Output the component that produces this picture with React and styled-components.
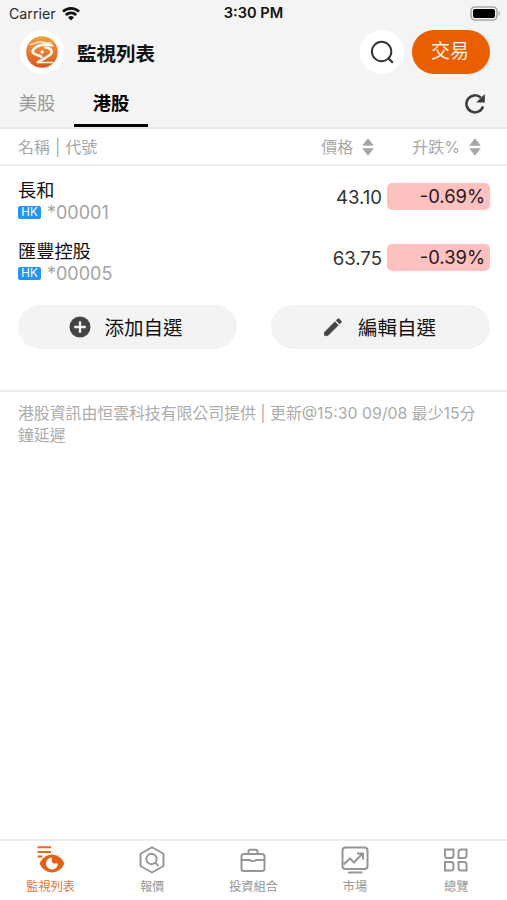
import React from 'react';

import styled, { createGlobalStyle } from "styled-components"

const GlobalStyle = createGlobalStyle`
* {
    box-sizing: border-box;
}
body {
    margin: 0;
    background-color: white;
    color: #1c1c1c;
    font-family: Inter, "Noto Sans CJK TC", sans-serif;
}
button {
    padding: 0;
    border: none;
    font: inherit;
    color: inherit;
    cursor: pointer;
}
`
const Screen = styled.div`
display: flex;
flex-direction: column;
height: 100vh;
`
const Header = styled.header`
height: 129px;
background-color: #f4f4f4;
border-bottom: 2px solid #e8e8e8;
`
const StatusBar = styled.div`
display: grid;
grid-template-columns: 1fr auto 1fr;
align-items: center;
height: 27px;
padding: 0 6px 0 9px;
line-height: 27px;
color: #2a2a2a;
`
const Carrier = styled.span`
display: flex;
align-items: center;
gap: 6px;
font-size: 14.2px;
`
const Clock = styled.span`
margin-right: 3px;
font-weight: 600;
color: #111;
font-size: 14.6px;
`
const BatterySlot = styled.span`
display: flex;
justify-content: flex-end;
`
const TitleBar = styled.div`
display: flex;
align-items: center;
height: 50px;
padding: 0 17px 0 20px;
`
const Logo = styled.span`
display: flex;
align-items: center;
justify-content: center;
width: 44px;
height: 44px;
border-radius: 50%;
background-color: white;
`
const Title = styled.h1`
flex: 1;
margin: 0 0 0 13px;
padding-top: 3px;
font-size: 19.5px;
line-height: 28px;
font-weight: 700;
color: #111;
`
const SearchButton = styled.button`
display: flex;
align-items: center;
justify-content: center;
width: 44px;
height: 44px;
border-radius: 50%;
background-color: white;
`
const TradeButton = styled.button`
width: 78px;
height: 44px;
margin-left: 8px;
padding-right: 2px;
border-radius: 22px;
background-color: #e95f00;
color: #fff1e3;
font-size: 19px;
line-height: 44px;
`
const Tabs = styled.nav`
display: flex;
align-items: center;
height: 50px;
padding-right: 21px;
`
const Tab = styled.button`
width: 74px;
height: 50px;
padding-top: 5px;
background: none;
border-bottom: 3px solid ${props => props.$active ? "#000" : "transparent"};
font-size: 18.2px;
line-height: 42px;
font-weight: ${props => props.$active ? 700 : 400};
color: ${props => props.$active ? "#000" : "#999"};
`
const RefreshButton = styled.button`
display: flex;
margin: 3px 0 0 auto;
background: none;
`
const ListHeader = styled.div`
display: flex;
align-items: center;
height: 37px;
padding: 0 26px 0 18px;
border-bottom: 2px solid #ececec;
font-size: 16px;
line-height: 34px;
color: #a8a8a8;
`
const HeaderName = styled.span`
flex: 1;
word-spacing: 0.5px;
`
const SortLabel = styled.span`
display: flex;
align-items: center;
gap: 9px;
margin-left: ${props => props.$offset || 0}px;
`
const StockRow = styled.div`
display: flex;
align-items: center;
height: 61px;
padding: 0 17px 0 18px;
`
const StockInfo = styled.div`
flex: 1;
padding-top: 8px;
`
const StockName = styled.div`
font-size: 18.2px;
line-height: 24px;
color: #111;
`
const StockCode = styled.div`
display: flex;
align-items: center;
gap: 6px;
font-size: 18px;
line-height: 22px;
color: #a3a3a3;
`
const Market = styled.span`
width: 23px;
height: 13px;
border-radius: 2px;
background-color: #2196f3;
color: white;
font-size: 11.5px;
line-height: 13px;
text-align: center;
`
const Price = styled.span`
font-size: 18.6px;
color: #333;
`
const Change = styled.span`
width: 103px;
height: 27px;
margin-left: 5px;
padding-right: 5px;
border-radius: 5px;
background-color: #ffc0c0;
color: #26191a;
font-size: 18.4px;
line-height: 27px;
text-align: right;
`
const Actions = styled.div`
display: flex;
justify-content: space-between;
margin: 17px 17px 0 18px;
`
const ActionButton = styled.button`
display: flex;
align-items: center;
justify-content: center;
gap: ${props => props.$gap || 12}px;
width: 219px;
height: 44px;
padding: 2px 3px 0 0;
border-radius: 22px;
background-color: #f3f3f3;
color: #111;
font-size: 19.5px;
line-height: 42px;

svg {
    margin-bottom: 2px;
}
`
const Notice = styled.p`
flex: 1;
margin: 41px 0 0;
padding: 11px 28px 0 18px;
border-top: 2px solid #ebebeb;
font-size: 15.87px;
line-height: 22px;
color: #acacac;
`
const BottomBar = styled.nav`
display: grid;
grid-template-columns: repeat(5, 1fr);
height: 61px;
border-top: 2px solid #ececec;
`
const NavItem = styled.button`
display: flex;
flex-direction: column;
align-items: center;
padding-top: 5px;
background: none;
font-size: 12.2px;
line-height: 18px;
color: ${props => props.$active ? "#e5763a" : "#969696"};

svg {
    margin-bottom: 4px;
}
`

const WifiIcon = () => (
    <svg width="18" height="14" viewBox="0 0 18 14" fill="none" stroke="#111" strokeWidth="2.6">
        <path d="M1 4.6a11.6 11.6 0 0 1 16 0" />
        <path d="M3.8 8a7.5 7.5 0 0 1 10.4 0" />
        <path d="M9 13.5 6 10.4a4.3 4.3 0 0 1 6 0Z" fill="#111" stroke="none" />
    </svg>
)

const BatteryIcon = () => (
    <svg width="31" height="15" viewBox="0 0 31 15">
        <rect x="1" y="1" width="26" height="13" rx="4" fill="#f4f4f4" stroke="#aaa" strokeWidth="1.6" />
        <rect x="3" y="3" width="22" height="9" rx="2" fill="#000" />
        <path d="M28.5 5.2c2 .6 2 4 0 4.6Z" fill="#aaa" />
    </svg>
)

const LogoIcon = () => (
    <svg width="32" height="32" viewBox="0 0 32 32">
        <defs>
            <linearGradient id="logoFill" x1="0" y1="0" x2="0" y2="1">
                <stop offset="0" stopColor="#f2a03d" />
                <stop offset="1" stopColor="#d9571f" />
            </linearGradient>
        </defs>
        <circle cx="16" cy="16" r="15.8" fill="url(#logoFill)" />
        <g fill="none" stroke="#fff8ef" strokeLinecap="round">
            <path d="M4.5 8.6C9 8 10.5 5.8 14.5 5.8c3 0 4 1.2 7 1h3.500" strokeWidth="1.3" />
            <path d="M26 9.400C20 8.200 14.500 8.400 10.500 10.800 6 13.500 5.300 16.300 9 18.200c2.500 1.200 5.500 1.300 6.500 2.800" strokeWidth="2.6" />
            <path d="M19.500 11.500c5 .5 7.300 3.200 5.500 6.200-2 3.200-7.500 4.800-13 8.300" strokeWidth="2.6" />
            <path d="M11 26.400h16" strokeWidth="1.500" />
        </g>
        <path d="m16.200 13.200.8 2 2 .8-2 .8-.8 2-.8-2-2-.8 2-.8Z" fill="#fff8ef" />
    </svg>
)

const SearchIcon = () => (
    <svg width="24" height="24" viewBox="0 0 24 24" fill="none" stroke="#333" strokeWidth="2">
        <circle cx="11.6" cy="11.5" r="9.7" />
        <path d="m17.8 17.8 5 5" strokeWidth="2.3" />
    </svg>
)

const RefreshIcon = () => (
    <svg width="22" height="22" viewBox="0 0 22 22">
        <path d="M19 13.5A8.5 8.5 0 1 1 16.8 4.7" fill="none" stroke="#3c3c3c" strokeWidth="2.5" />
        <path d="M20.8 1v8.6h-8.6Z" fill="#3c3c3c" />
    </svg>
)

const SortIcon = () => (
    <svg width="12" height="18" viewBox="0 0 12 18" fill="#a6a6a6">
        <path d="M6 .3 11.8 7.8H.2Z" />
        <path d="M6 17.7 11.8 10.200H.2Z" />
    </svg>
)

const AddIcon = () => (
    <svg width="23" height="22" viewBox="0 0 23 22">
        <circle cx="11" cy="11" r="10.5" fill="#444" />
        <path d="M11 5.2v11.6M5.2 11h11.6" stroke="#f3f3f3" strokeWidth="2.3" />
    </svg>
)

const EditIcon = () => (
    <svg width="22" height="22" viewBox="0 0 22 22" fill="#444" stroke="#444" strokeWidth="0.7" strokeLinejoin="round">
        <path d="M2.5 16.2 12.9 5.8l3.4 3.4L5.9 19.6H2.5Z" />
        <path d="m14.2 4.5 1.5-1.5c.5-.5 1-.5 1.5 0l1.9 1.9c.5.5.5 1 0 1.5l-1.5 1.5Z" />
    </svg>
)

const WatchIcon = () => (
    <svg width="28" height="28" viewBox="0 0 28 28">
        <path d="M.5 1.2H14M.5 5.9H14M.5 10.4h5" stroke="#e46b25" strokeWidth="2" />
        <path d="M2.7 17.5C5 12 9.5 8.5 15 8.5S25 12 27.3 17.5C25 23 20.5 26.5 15 26.500S5 23 2.7 17.5Z" fill="#e56115" />
        <path d="M15 11.500a6 6 0 1 0 6 6h-3.200a2.800 2.800 0 0 1-2.800-2.800Z" fill="white" />
    </svg>
)

const QuoteIcon = () => (
    <svg width="28" height="28" viewBox="0 0 28 28" fill="none" stroke="#969696" strokeWidth="1.9" strokeLinejoin="round">
        <path d="M14 1.2 25.500 7.800V20L14 26.500 2.500 20V7.800Z" />
        <circle cx="13.500" cy="13" r="5.200" />
        <path d="m17.200 16.700 3.300 3.300" />
    </svg>
)

const PortfolioIcon = () => (
    <svg width="28" height="28" viewBox="0 0 28 28" fill="none" stroke="#969696" strokeWidth="2">
        <path d="M9.5 8V5.3c0-1 .5-1.5 1.5-1.5h6c1 0 1.5.5 1.5 1.5V8" />
        <rect x="2.5" y="8" width="23" height="17" rx="2.5" />
        <path d="M3 14h8l1.5 1.2h3L17 14h8" strokeWidth="1.8" />
    </svg>
)

const MarketIcon = () => (
    <svg width="28" height="28" viewBox="0 0 28 28" fill="none" stroke="#969696" strokeWidth="2">
        <rect x="1.500" y="1.500" width="25" height="21.500" rx="3" />
        <path d="m2.500 18.500 6.500-6 4 4 8-8.500M16 7.500h6v6" />
        <path d="M7 26.500h14.500" />
    </svg>
)

const OverviewIcon = () => (
    <svg width="28" height="28" viewBox="0 0 28 28" fill="none" stroke="#969696" strokeWidth="2">
        <path d="M3 3.5h8.5v6A2.5 2.5 0 0 1 9 12H5.500A2.500 2.500 0 0 1 3 9.500Z" />
        <path d="M24.5 3.5H19A2.5 2.5 0 0 0 16.5 6v6H22a2.500 2.500 0 0 0 2.500-2.500Z" />
        <path d="M3 16h6a2.500 2.500 0 0 1 2.500 2.500V22A2.500 2.500 0 0 1 9 24.500H3Z" />
        <path d="M16.500 16H22a2.500 2.500 0 0 1 2.500 2.500v6H19a2.500 2.500 0 0 1-2.500-2.500Z" />
    </svg>
)

const stocks = [
    { name: "長和", code: "*00001", price: "43.10", change: "-0.69%" },
    { name: "匯豐控股", code: "*00005", price: "63.75", change: "-0.39%" }
]

const navItems = [
    { label: "監視列表", icon: WatchIcon },
    { label: "報價", icon: QuoteIcon },
    { label: "投資組合", icon: PortfolioIcon },
    { label: "市場", icon: MarketIcon },
    { label: "總覽", icon: OverviewIcon }
]

function renderStocks (items) {
    return items.map((el) => (
        <StockRow key={el.code}>
            <StockInfo>
                <StockName>{el.name}</StockName>
                <StockCode><Market>HK</Market>{el.code}</StockCode>
            </StockInfo>
            <Price>{el.price}</Price>
            <Change>{el.change}</Change>
        </StockRow>
    ))
}

const App = () => (
    <Screen>
        <GlobalStyle />
        <Header>
            <StatusBar>
                <Carrier>Carrier <WifiIcon /></Carrier>
                <Clock>3:30 PM</Clock>
                <BatterySlot><BatteryIcon /></BatterySlot>
            </StatusBar>
            <TitleBar>
                <Logo><LogoIcon /></Logo>
                <Title>監視列表</Title>
                <SearchButton aria-label="搜尋"><SearchIcon /></SearchButton>
                <TradeButton>交易</TradeButton>
            </TitleBar>
            <Tabs>
                <Tab>美股</Tab>
                <Tab $active>港股</Tab>
                <RefreshButton aria-label="更新"><RefreshIcon /></RefreshButton>
            </Tabs>
        </Header>
        <ListHeader>
            <HeaderName>名稱 | 代號</HeaderName>
            <SortLabel>價格 <SortIcon /></SortLabel>
            <SortLabel $offset={38}>升跌% <SortIcon /></SortLabel>
        </ListHeader>
        {renderStocks(stocks)}
        <Actions>
            <ActionButton><AddIcon />添加自選</ActionButton>
            <ActionButton $gap={14}><EditIcon />編輯自選</ActionButton>
        </Actions>
        <Notice>港股資訊由恒雲科技有限公司提供 | 更新@15:30 09/08 最少15分鐘延遲</Notice>
        <BottomBar>
            {navItems.map((el, index) => (
                <NavItem key={el.label} $active={index === 0}>
                    <el.icon />
                    {el.label}
                </NavItem>
            ))}
        </BottomBar>
    </Screen>
)

export default App
